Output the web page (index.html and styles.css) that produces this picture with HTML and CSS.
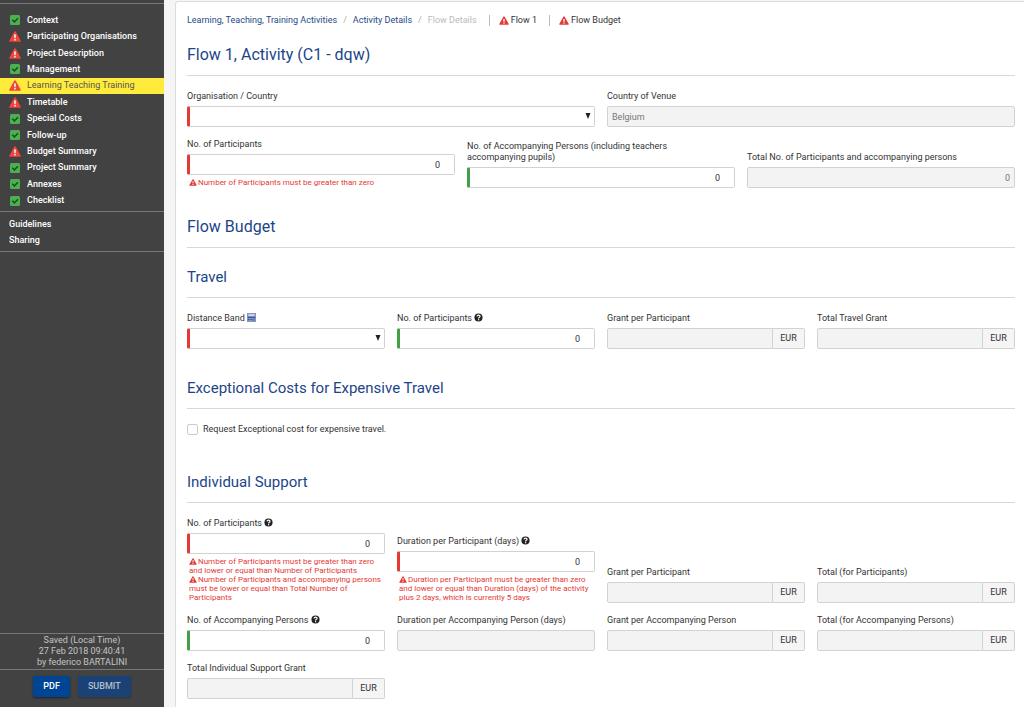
FILE: index.html
```html
<!DOCTYPE html>
<html lang="en">
<head>
<meta charset="utf-8">
<title>Flow Details</title>
<meta name="viewport" content="width=device-width, initial-scale=1">
<link rel="stylesheet" href="styles.css">
</head>
<body>
<svg class="symbols" aria-hidden="true">
  <symbol id="warn" viewBox="0 0 12 11"><path fill="currentColor" d="M6 0.3Q6.5 0.3 6.8 0.8L11.8 9.8Q12 10.8 11.2 10.8H0.8Q0 10.8 0.2 9.8L5.2 0.8Q5.500 .3 6 .3Z"/><path class="mark" d="M5.100 3.600 5.400 7.200H6.600L6.900 3.600ZM5.300 8V9.400H6.700V8Z"/></symbol>
  <symbol id="ok" viewBox="0 0 10 10"><rect width="10" height="10" rx="1.500" fill="#4caf50"/><path d="M2.300 4.800 4.400 6.900 7.900 3.200" fill="none" stroke="#1d4a22" stroke-width="1.500"/></symbol>
  <symbol id="help" viewBox="0 0 10 10"><circle cx="5" cy="5" r="4.500" fill="#222"/><path d="M3.300 3.800Q3.500 2.300 5 2.300 6.700 2.300 6.700 3.700 6.700 4.500 5.700 5 5.100 5.300 5.100 6" fill="none" stroke="#fff" stroke-width="1.300"/><rect x="4.400" y="6.800" width="1.400" height="1.300" fill="#fff"/></symbol>
  <symbol id="calc" viewBox="0 0 10 10"><rect x=".5" y=".5" width="9" height="9" fill="#6f80b8" stroke="#8791b5"/><rect x="1.500" y="1.300" width="7" height="2.200" fill="#d5dcf2"/><path d="M1 5H9M1 7H6.500" stroke="#2f479c"/><path d="M2 6H8M2 8H6" stroke="#c5cdea" stroke-dasharray="1 1"/></symbol>
  <symbol id="arrow" viewBox="0 0 6 6"><path d="M0.500 0H5.500L3 6Z" fill="#222"/></symbol>
</svg>
<div class="app">
  <aside class="side">
    <nav class="nav">
      <a href="#"><svg class="ok"><use href="#ok"/></svg>Context</a>
      <a href="#"><svg class="warn"><use href="#warn"/></svg>Participating Organisations</a>
      <a href="#"><svg class="warn"><use href="#warn"/></svg>Project Description</a>
      <a href="#"><svg class="ok"><use href="#ok"/></svg>Management</a>
      <a href="#" class="active" aria-current="page"><svg class="warn"><use href="#warn"/></svg>Learning Teaching Training</a>
      <a href="#"><svg class="warn"><use href="#warn"/></svg>Timetable</a>
      <a href="#"><svg class="ok"><use href="#ok"/></svg>Special Costs</a>
      <a href="#"><svg class="ok"><use href="#ok"/></svg>Follow-up</a>
      <a href="#"><svg class="warn"><use href="#warn"/></svg>Budget Summary</a>
      <a href="#"><svg class="ok"><use href="#ok"/></svg>Project Summary</a>
      <a href="#"><svg class="ok"><use href="#ok"/></svg>Annexes</a>
      <a href="#"><svg class="ok"><use href="#ok"/></svg>Checklist</a>
    </nav>
    <nav class="links">
      <a href="#">Guidelines</a>
      <a href="#">Sharing</a>
    </nav>
    <div class="saved">Saved (Local Time)<br>27 Feb 2018 09:40:41<br>by federico BARTALINI</div>
    <div class="actions"><button class="btn">PDF</button><button class="btn" disabled>SUBMIT</button></div>
  </aside>
  <main class="card">
    <nav class="crumbs">
      <a href="#">Learning, Teaching, Training Activities</a><span class="sep">/</span><a href="#">Activity Details</a><span class="sep">/</span><span class="current">Flow Details</span>
      <a href="#" class="jump"><svg class="warn"><use href="#warn"/></svg>Flow 1</a>
      <a href="#" class="jump"><svg class="warn"><use href="#warn"/></svg>Flow Budget</a>
    </nav>

    <section class="section">
      <h2 class="major">Flow 1, Activity (C1 - dqw)</h2>
      <div class="grid two">
        <div class="field"><label for="org">Organisation / Country</label><div class="pick"><select id="org" class="ctl bad"><option></option></select><svg><use href="#arrow"/></svg></div></div>
        <div class="field"><label for="venue">Country of Venue</label><input id="venue" class="ctl" value="Belgium" readonly></div>
      </div>
      <div class="grid three">
        <div class="field"><label for="np">No. of Participants</label><input id="np" class="ctl num bad" value="0"><div class="errors"><p><svg><use href="#warn"/></svg>Number of Participants must be greater than zero</p></div></div>
        <div class="field"><label for="nap">No. of Accompanying Persons (including teachers<br>accompanying pupils)</label><input id="nap" class="ctl num good" value="0"></div>
        <div class="field"><label for="tot">Total No. of Participants and accompanying persons</label><input id="tot" class="ctl right" value="0" readonly></div>
      </div>
    </section>

    <section class="section">
      <h2 class="major">Flow Budget</h2>
    </section>

    <section class="section sub">
      <h2>Travel</h2>
      <div class="grid four">
        <div class="field"><label for="band">Distance Band <svg><use href="#calc"/></svg></label><div class="pick"><select id="band" class="ctl bad"><option></option></select><svg><use href="#arrow"/></svg></div></div>
        <div class="field"><label for="tnp">No. of Participants <svg><use href="#help"/></svg></label><input id="tnp" class="ctl num good" value="0"></div>
        <div class="field"><label for="tg">Grant per Participant</label><div class="money"><input id="tg" class="ctl" readonly><span>EUR</span></div></div>
        <div class="field"><label for="ttg">Total Travel Grant</label><div class="money"><input id="ttg" class="ctl" readonly><span>EUR</span></div></div>
      </div>
    </section>

    <section class="section">
      <h2>Exceptional Costs for Expensive Travel</h2>
      <label class="check"><input type="checkbox">Request Exceptional cost for expensive travel.</label>
    </section>

    <section class="section">
      <h2>Individual Support</h2>
      <div class="grid four">
        <div class="field"><label for="inp">No. of Participants <svg><use href="#help"/></svg></label><input id="inp" class="ctl num bad" value="0"><div class="errors"><p><svg><use href="#warn"/></svg>Number of Participants must be greater than zero<br>and lower or equal than Number of Participants</p><p><svg><use href="#warn"/></svg>Number of Participants and accompanying persons<br>must be lower or equal than Total Number of<br>Participants</p></div></div>
        <div class="field"><label for="dur">Duration per Participant (days) <svg><use href="#help"/></svg></label><input id="dur" class="ctl num bad" value="0"><div class="errors"><p><svg><use href="#warn"/></svg>Duration per Participant must be greater than zero<br>and lower or equal than Duration (days) of the activity<br>plus 2 days, which is currently 5 days</p></div></div>
        <div class="field"><label for="ig">Grant per Participant</label><div class="money"><input id="ig" class="ctl" readonly><span>EUR</span></div></div>
        <div class="field"><label for="it">Total (for Participants)</label><div class="money"><input id="it" class="ctl" readonly><span>EUR</span></div></div>
        <div class="field"><label for="ia">No. of Accompanying Persons <svg><use href="#help"/></svg></label><input id="ia" class="ctl num good" value="0"></div>
        <div class="field"><label for="ida">Duration per Accompanying Person (days)</label><input id="ida" class="ctl" readonly></div>
        <div class="field"><label for="iga">Grant per Accompanying Person</label><div class="money"><input id="iga" class="ctl" readonly><span>EUR</span></div></div>
        <div class="field"><label for="ita">Total (for Accompanying Persons)</label><div class="money"><input id="ita" class="ctl" readonly><span>EUR</span></div></div>
        <div class="field"><label for="its">Total Individual Support Grant</label><div class="money"><input id="its" class="ctl" readonly><span>EUR</span></div></div>
      </div>
    </section>
  </main>
</div>
</body>
</html>
```
FILE: styles.css
```css
* { box-sizing: border-box; }
body { margin: 0; background: #f5f5f5; color: #333; font: 9px/11px Roboto, "Liberation Sans", sans-serif; }
a { color: inherit; text-decoration: none; }
button, input, select { font: inherit; color: inherit; }
.symbols { position: absolute; width: 0; height: 0; }
.app { display: grid; grid-template-columns: 164px minmax(0, 1fr); gap: 11px; min-height: 100vh; }
.warn { width: 10px; height: 9px; color: #e53935; }
.mark { fill: #fff; }

/* Sidebar */
.side { display: flex; flex-direction: column; height: 100vh; position: sticky; top: 0; padding-top: 3px; background: #424242; color: #fff; font-weight: 500; }
.nav { display: grid; grid-auto-rows: 1fr; height: 209px; padding: 8px 0 2px; border-top: 1px solid #777; border-bottom: 1px solid #777; }
.nav a { display: flex; align-items: center; padding-left: 9px; }
.nav svg { width: 12px; height: 11px; margin-right: 6px; }
.nav .warn { color: #f0443c; }
.nav .mark { fill: #6b2320; }
.nav .ok { height: 10px; }
.nav .active { background: #ffeb3b; color: #555; font-weight: 400; }
.nav .active .mark { fill: #fff; }
.links { display: grid; gap: 5px; padding: 7px 9px 5px; border-bottom: 1px solid #777; }
.saved { margin-top: auto; padding: 1px 0; border-top: 1px solid #777; border-bottom: 1px solid #777; color: #c4c4c4; font-weight: 400; text-align: center; }
.actions { display: flex; justify-content: center; gap: 8px; padding: 6px 0 10px; }
.btn { height: 21px; padding: 0 10px; border: 0; border-radius: 2px; background: #004494; color: #fff; font-weight: 500; box-shadow: 0 1px 2px #222; }
.btn:disabled { background: #1a4277; color: #b4bfcd; box-shadow: 0 1px 2px #333; }

/* Form card */
.card { padding: 12px 9px 8px 11px; margin-top: 1px; border-top: 1px solid #ddd; border-left: 1px solid #ddd; border-top-left-radius: 3px; background: #fff; }
.crumbs { display: flex; align-items: center; height: 12px; color: #234b87; }
.sep { margin: 0 6px; color: #aaa; }
.current { color: #bbb; }
.jump { display: flex; align-items: center; gap: 2px; margin-left: 12px; padding-left: 9px; border-left: 1px solid #bbb; color: #333; }
.section { padding-top: 29px; }
.section:first-of-type, .section.sub { padding-top: 19px; }
h2 { margin: 0; padding-bottom: 10px; border-bottom: 1px solid #d8d8d8; color: #1c4587; font-size: 15px; line-height: 20px; font-weight: 400; }
h2.major { font-size: 16px; }
.grid { display: grid; align-items: end; gap: 12px; margin-top: 15px; }
.grid + .grid { margin-top: 12px; }
.two { grid-template-columns: repeat(2, minmax(0, 1fr)); }
.three { grid-template-columns: repeat(3, minmax(0, 1fr)); }
.four { grid-template-columns: repeat(4, minmax(0, 1fr)); }
.field label { display: block; margin-bottom: 4px; }
.field label svg { width: 9px; height: 9px; vertical-align: -1px; }
.ctl { display: block; width: 100%; height: 21px; padding: 0 4px; border: 1px solid #d2d2d2; border-radius: 2px; background: #fff; appearance: none; outline-offset: -1px; }
.ctl:read-only:not(select) { background: #f3f3f3; color: #777; }
.ctl.bad { border-left: 3px solid #e53935; }
.ctl.good { border-left: 3px solid #43a047; }
.num { padding-right: 14px; text-align: right; }
.right { text-align: right; }
.pick { position: relative; }
.pick svg { position: absolute; right: 4px; top: 7px; width: 6px; height: 6px; pointer-events: none; }
.money { display: flex; }
.money .ctl { flex: 1; min-width: 0; border-radius: 2px 0 0 2px; }
.money span { width: 32px; border: 1px solid #d2d2d2; border-left: 0; border-radius: 0 2px 2px 0; background: #f5f5f5; line-height: 19px; text-align: center; }
.errors { padding: 3px 0 1px 2px; color: #e53935; font-size: 8px; line-height: 9px; white-space: nowrap; }
.errors p { margin: 0; }
.errors svg { width: 8px; height: 7px; margin-right: 1px; vertical-align: -1px; }
.check { display: flex; align-items: center; gap: 5px; height: 19px; margin-top: 15px; padding-bottom: 8px; }
.check input { width: 11px; height: 11px; margin: 0; border: 1px solid #ccc; border-radius: 2px; background: #fff; appearance: none; }
.check input:checked { background: #004494; }
```
